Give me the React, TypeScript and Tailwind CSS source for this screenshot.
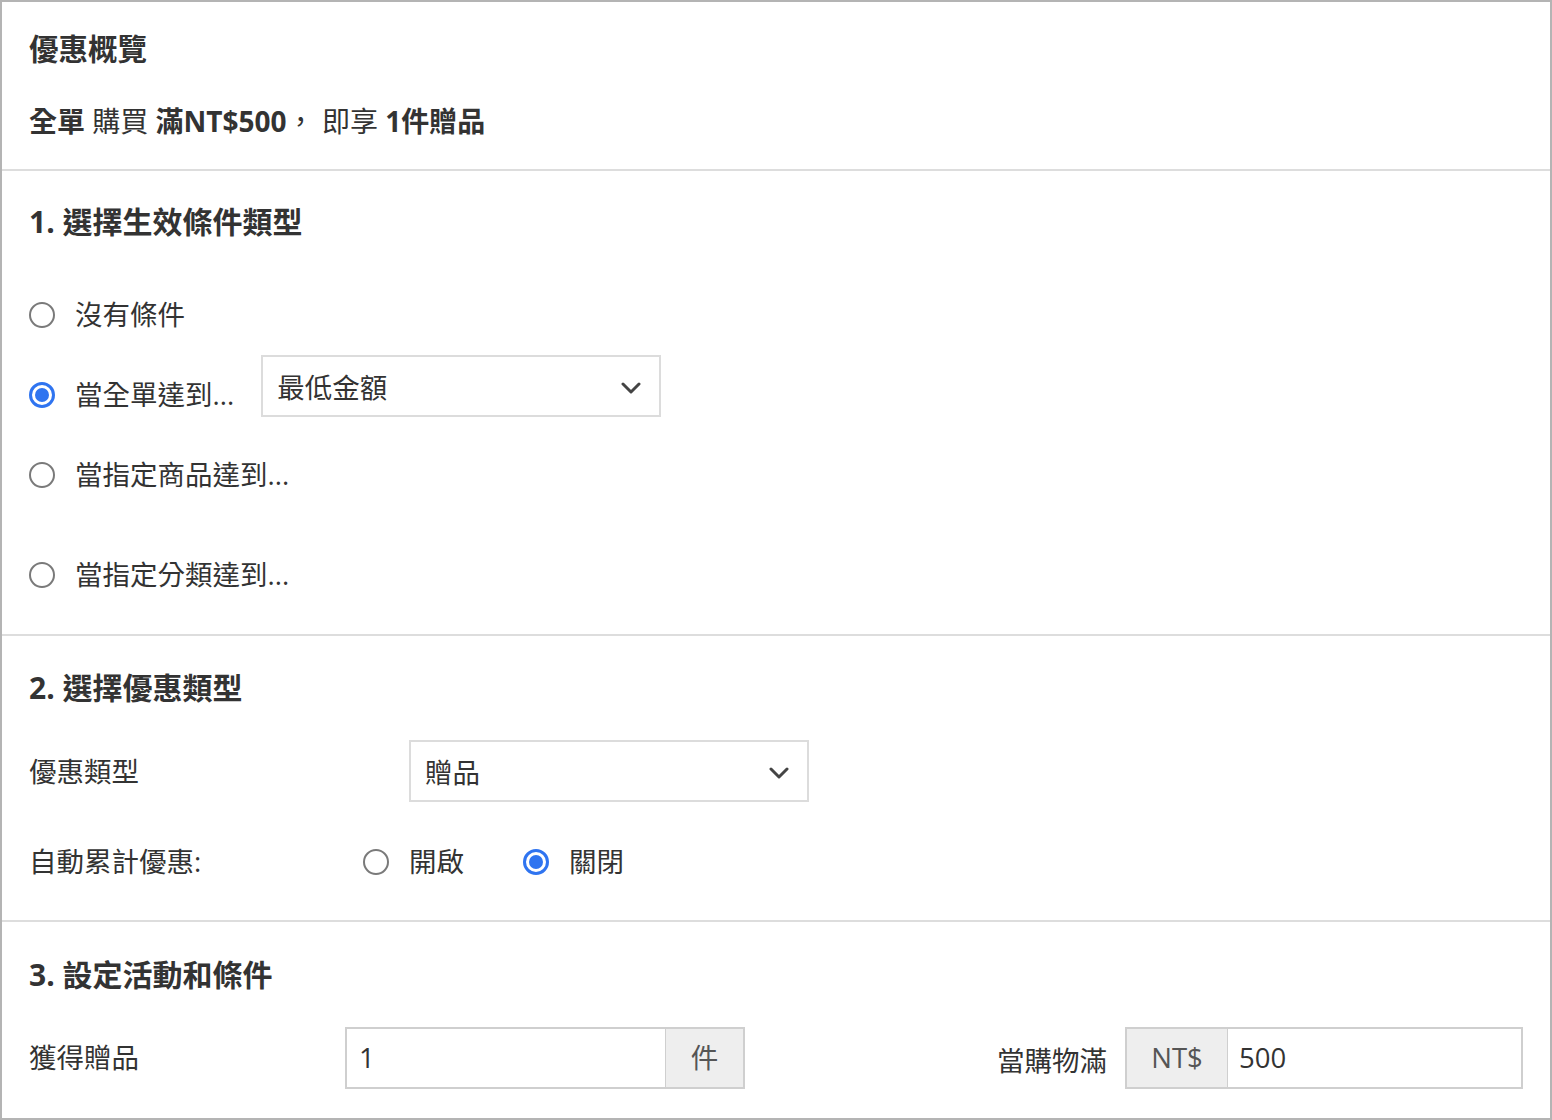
import React, { useState } from "react";

const FONT = { fontFamily: '"Open Sans", "Noto Sans CJK TC", "Noto Sans", sans-serif' };

function Radio({ checked, label, onClick }: { checked: boolean; label: string; onClick?: () => void }) {
  return (
    <label onClick={onClick} className="flex items-center cursor-pointer">
      <span
        className={`w-[26px] h-[26px] rounded-full flex items-center justify-center shrink-0 ${
          checked ? "border-[3px] border-[#2f74f0]" : "border-2 border-[#7a7a7a]"
        }`}
      >
        {checked && <span className="w-[14px] h-[14px] rounded-full bg-[#2f74f0]" />}
      </span>
      <span className="ml-[20px] text-[27.5px] text-[#333]">{label}</span>
    </label>
  );
}

function Chevron() {
  return (
    <svg width="20" height="12" viewBox="0 0 20 12" fill="none" className="shrink-0 mt-[4px]">
      <path d="M2 2l8 8 8-8" stroke="#444" strokeWidth="3" strokeLinecap="round" strokeLinejoin="round" />
    </svg>
  );
}

function Select({ value, className = "" }: { value: string; className?: string }) {
  return (
    <div className={`h-[62px] w-[400px] border-2 border-[#dcdcdc] bg-white flex items-center justify-between pl-[14px] pr-[18px] ${className}`}>
      <span className="text-[27.5px] text-[#333] pt-[4px]">{value}</span>
      <Chevron />
    </div>
  );
}

export default function App() {
  const [cond, setCond] = useState(1);
  const [stack, setStack] = useState(false);

  return (
    <div style={FONT} className="w-[1552px] h-[1120px] bg-white border-2 border-[#b4b4b4] text-[#333] overflow-hidden">
      {/* Overview */}
      <section className="px-[27px] pt-[27px] h-[169px] border-b-2 border-[#dddddd]">
        <h1 className="text-[29.5px] font-bold leading-[40px]">優惠概覽</h1>
        <p className="mt-[32px] text-[28px] leading-[40px]">
          <span className="font-bold">全單</span> 購買 <span className="font-bold">滿NT$500</span>， 即享{" "}
          <span className="font-bold">1件贈品</span>
        </p>
      </section>

      {/* Section 1 */}
      <section className="px-[27px] pt-[31px] h-[465px] border-b-2 border-[#dddddd]">
        <h2 className="text-[30px] font-bold leading-[40px]">1. 選擇生效條件類型</h2>
        <div className="mt-[53px] flex flex-col">
          <div className="h-[40px] flex items-center">
            <Radio checked={cond === 0} label="沒有條件" onClick={() => setCond(0)} />
          </div>
          <div className="mt-[40px] h-[40px] flex items-center">
            <Radio checked={cond === 1} label="當全單達到..." onClick={() => setCond(1)} />
            <Select value="最低金額" className="ml-[27px] -mt-[18px]" />
          </div>
          <div className="mt-[40px] h-[40px] flex items-center">
            <Radio checked={cond === 2} label="當指定商品達到..." onClick={() => setCond(2)} />
          </div>
          <div className="mt-[60px] h-[40px] flex items-center">
            <Radio checked={cond === 3} label="當指定分類達到..." onClick={() => setCond(3)} />
          </div>
        </div>
      </section>

      {/* Section 2 */}
      <section className="px-[27px] pt-[32px] h-[286px] border-b-2 border-[#dddddd]">
        <h2 className="text-[30px] font-bold leading-[40px]">2. 選擇優惠類型</h2>
        <div className="mt-[32px] flex items-center">
          <span className="w-[380px] text-[27.5px] pt-[1px]">優惠類型</span>
          <Select value="贈品" />
        </div>
        <div className="mt-[40px] flex items-center h-[40px]">
          <span className="w-[334px] text-[27.5px]">自動累計優惠:</span>
          <Radio checked={stack} label="開啟" onClick={() => setStack(true)} />
          <span className="w-[59px]" />
          <Radio checked={!stack} label="關閉" onClick={() => setStack(false)} />
        </div>
      </section>

      {/* Section 3 */}
      <section className="px-[27px] pt-[33px]">
        <h2 className="text-[30px] font-bold leading-[40px]">3. 設定活動和條件</h2>
        <div className="mt-[32px] flex items-center">
          <span className="w-[316px] text-[27.5px]">獲得贈品</span>
          <div className="flex h-[62px] w-[400px] border-2 border-[#cfcfcf]">
            <div className="flex-1 flex items-center pl-[12px] text-[27.5px] bg-white">1</div>
            <div className="w-[78px] flex items-center justify-center bg-[#eeeeee] border-l border-[#cfcfcf] text-[27.5px] text-[#555]">件</div>
          </div>
          <span className="ml-auto text-[27.5px] mr-[18px] pt-[6px]">當購物滿</span>
          <div className="flex h-[62px] w-[398px] border-2 border-[#cfcfcf]">
            <div className="w-[101px] flex items-center justify-center bg-[#eeeeee] border-r border-[#cfcfcf] text-[27.5px] text-[#555]">NT$</div>
            <div className="flex-1 flex items-center pl-[11px] text-[27.5px] bg-white">500</div>
          </div>
        </div>
      </section>
    </div>
  );
}
